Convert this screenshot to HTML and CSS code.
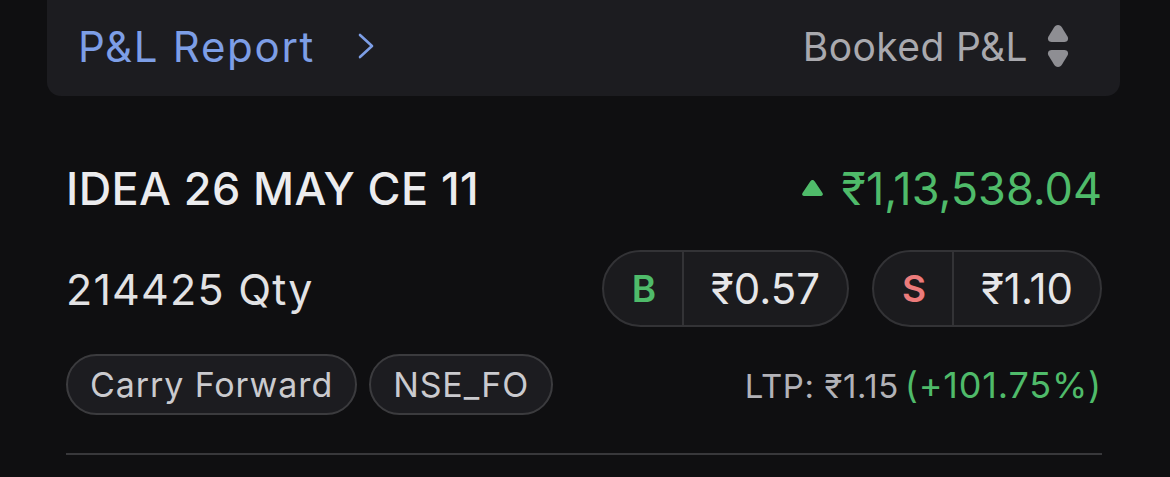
FILE: index.html
```html
<!DOCTYPE html>
<html>
<head>
    <title>P&amp;L Report</title>
    <meta charset="utf-8">
    <meta name="viewport" content="width=device-width, initial-scale=1.0" />
    <link rel="stylesheet" href="styles.css">
</head>
<body>
    <div class="page">
        <div class="report-bar">
            <a class="report-link" href="#">P&amp;L Report
                <svg class="chevron" width="18" height="28" viewBox="0 0 18 28"><path d="M3 3 L15 14 L3 25" fill="none" stroke="currentColor" stroke-width="2.6" stroke-linecap="round" stroke-linejoin="round"/></svg>
            </a>
            <div class="report-sort">Booked P&amp;L
                <svg class="sort-icon" width="24" height="46" viewBox="0 0 24 46"><path d="M12 2 C10 2 9 3 8 4.5 L2.5 13.5 C1 16 2.5 19 5.5 19 L18.5 19 C21.5 19 23 16 21.5 13.5 L16 4.5 C15 3 14 2 12 2 Z" fill="currentColor"/><path d="M12 44 C10 44 9 43 8 41.5 L2.5 32.5 C1 30 2.5 27 5.5 27 L18.5 27 C21.5 27 23 30 21.5 32.5 L16 41.5 C15 43 14 44 12 44 Z" fill="currentColor"/></svg>
            </div>
        </div>

        <div class="position">
            <div class="position-row">
                <div class="symbol">IDEA 26 MAY CE 11</div>
                <div class="pnl">
                    <svg class="up-arrow" width="23" height="18" viewBox="0 0 23 18"><path d="M11.5 1 C10.5 1 9.8 1.6 9.2 2.5 L1.5 14 C0.5 15.6 1.4 17 3.2 17 L19.8 17 C21.6 17 22.5 15.6 21.5 14 L13.8 2.5 C13.2 1.6 12.5 1 11.5 1 Z" fill="currentColor"/></svg>
                    ₹1,13,538.04
                </div>
            </div>
            <div class="position-row qty-row">
                <div class="qty">214425 Qty</div>
                <div class="prices">
                    <div class="price-pill">
                        <span class="side side-buy">B</span>
                        <span class="price">₹0.57</span>
                    </div>
                    <div class="price-pill">
                        <span class="side side-sell">S</span>
                        <span class="price">₹1.10</span>
                    </div>
                </div>
            </div>
            <div class="position-row tag-row">
                <div class="tags">
                    <span class="tag">Carry Forward</span>
                    <span class="tag">NSE_FO</span>
                </div>
                <div class="ltp">LTP: ₹1.15 <span class="ltp-change">(+101.75%)</span></div>
            </div>
        </div>
    </div>
</body>
</html>
```

FILE: styles.css
```css
html, body {
    margin: 0;
    padding: 0;
    background-color: #0f0f11;
}
body {
    font-family: Inter, "Noto Sans", sans-serif;
    color: #e6e6e8;
}
.page {
    padding: 0 50px 0 47px;
}
.report-bar {
    height: 96px;
    display: flex;
    align-items: center;
    justify-content: space-between;
    background-color: #1c1c20;
    border-radius: 0 0 14px 14px;
    padding: 0 50px 4px 31px;
    box-sizing: border-box;
}
.report-link {
    display: flex;
    align-items: center;
    gap: 42px;
    color: #7d9ee6;
    text-decoration: none;
    font-size: 42px;
    letter-spacing: 1.7px;
}
.chevron {
    color: #7d9ee6;
}
.report-sort {
    display: flex;
    align-items: center;
    gap: 18px;
    color: #a9a9ae;
    font-size: 39px;
    letter-spacing: 0.4px;
}
.sort-icon {
    color: #8e8e93;
}
.position {
    margin: 0 18px 0 19px;
    padding: 0 0 38px;
    border-bottom: 2px solid #38383b;
}
.position-row {
    display: flex;
    align-items: center;
    justify-content: space-between;
}
.position-row:first-child {
    margin-top: 65px;
}
.symbol {
    font-size: 45px;
    font-weight: 500;
    letter-spacing: 0.4px;
    color: #ececee;
}
.pnl {
    font-size: 45px;
    color: #4fbb6a;
    display: flex;
    align-items: center;
}
.up-arrow {
    margin-right: 18px;
    margin-top: -2px;
}
.qty-row {
    margin-top: 34px;
}
.qty {
    font-size: 43px;
    letter-spacing: 1.2px;
    color: #e2e2e4;
}
.prices {
    display: flex;
    gap: 23px;
}
.price-pill {
    display: flex;
    align-items: stretch;
    height: 77px;
    box-sizing: border-box;
    border: 2px solid #333336;
    border-radius: 39px;
    background-color: #1b1b1e;
}
.side {
    display: flex;
    align-items: center;
    padding: 0 26px 0 28px;
    border-right: 2px solid #333336;
    font-size: 37px;
    font-weight: 600;
}
.side-buy {
    color: #4fbb6a;
}
.side-sell {
    color: #ec7b7b;
}
.price {
    display: flex;
    align-items: center;
    padding: 0 27px 0 27px;
    font-size: 42px;
    color: #e6e6e8;
}
.tag-row {
    margin-top: 27px;
}
.tags {
    display: flex;
    gap: 12px;
}
.tag {
    height: 61px;
    box-sizing: border-box;
    display: flex;
    align-items: center;
    padding: 0 22px;
    border: 2px solid #3b3b3e;
    border-radius: 31px;
    background-color: #1c1c20;
    font-size: 34px;
    letter-spacing: 0.9px;
    color: #cacace;
}
.ltp {
    font-size: 33px;
    letter-spacing: 0.6px;
    color: #b2b2b7;
}
.ltp-change {
    color: #4fbb6a;
    font-size: 36px;
    letter-spacing: 0.8px;
    margin-left: -4px;
}
```
